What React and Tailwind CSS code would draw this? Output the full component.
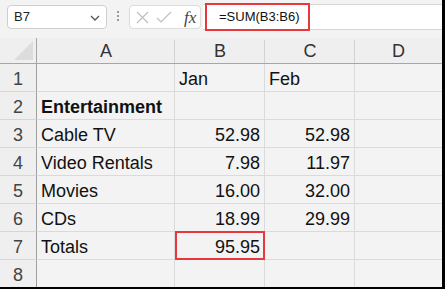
import React from "react";

const cellFont = { fontFamily: '"Liberation Sans", Arial, sans-serif' };

const rows = [
  { n: 1, a: "", b: "Jan", c: "Feb", bLeft: true },
  { n: 2, a: "Entertainment", bold: true, b: "", c: "" },
  { n: 3, a: "Cable TV", b: "52.98", c: "52.98" },
  { n: 4, a: "Video Rentals", b: "7.98", c: "11.97" },
  { n: 5, a: "Movies", b: "16.00", c: "32.00" },
  { n: 6, a: "CDs", b: "18.99", c: "29.99" },
  { n: 7, a: "Totals", b: "95.95", c: "", boxed: true },
  { n: 8, a: "", b: "", c: "" },
];

function Cell({ children, align = "left", bold = false, boxed = false, last = false }) {
  return (
    <div
      className={
        "relative h-[28px] border-b border-[#dadada] pt-[3px] leading-[25px] text-[18px] text-[#111] whitespace-nowrap overflow-visible " +
        (last ? "" : "border-r ") +
        (align === "right" ? "text-right pr-[4px] " : "text-left pl-[4px] ") +
        (bold ? "font-bold" : "")
      }
    >
      {children}
      {boxed && (
        <div className="absolute left-0 top-[-1px] w-[90px] h-[29px] border-2 border-[#e8383d] pointer-events-none" />
      )}
    </div>
  );
}

export default function App() {
  return (
    <div
      className="w-[445px] h-[289px] bg-[#f3f3f3] overflow-hidden border-r-[3px] border-b-[2px] border-black flex flex-col"
      style={cellFont}
    >
      {/* top bar */}
      <div className="h-[38px] flex items-start shrink-0">
        <div className="ml-[7px] mt-[5px] w-[100px] h-[24px] bg-white border border-[#cfcfcf] rounded-[4px] flex items-center justify-between pl-[6px] pr-[6px]">
          <span className="text-[13px] text-[#222]">B7</span>
          <svg width="10" height="6" viewBox="0 0 10 6" className="mt-[1px]">
            <path d="M1 1 L5 5 L9 1" fill="none" stroke="#555" strokeWidth="1.3" />
          </svg>
        </div>
        <div className="ml-[10px] mt-[11px] flex flex-col gap-[2px]">
          <div className="w-[2px] h-[2px] bg-[#9a9a9a]" />
          <div className="w-[2px] h-[2px] bg-[#9a9a9a]" />
          <div className="w-[2px] h-[2px] bg-[#9a9a9a]" />
        </div>
        <div className="ml-[10px] mt-[5px] w-[72px] h-[24px] bg-white border border-[#dcdcdc] rounded-[4px] flex items-center pl-[6px]">
          <svg width="13" height="13" viewBox="0 0 13 13">
            <path d="M1 1 L12 12 M12 1 L1 12" stroke="#bdbdbd" strokeWidth="1.1" fill="none" />
          </svg>
          <svg width="16" height="13" viewBox="0 0 16 13" className="ml-[7px]">
            <path d="M1 7 L5 11 L15 1" stroke="#bdbdbd" strokeWidth="1.1" fill="none" />
          </svg>
          <span
            className="ml-[12px] text-[17px] italic text-[#444] leading-none"
            style={{ fontFamily: '"Liberation Serif", "Times New Roman", serif' }}
          >
            fx
          </span>
        </div>
        <div className="ml-[2px] mt-[4px] flex-1 h-[26px] bg-white border-y border-[#d6d6d6] flex items-center">
          <div className="ml-[2px] w-[105px] h-[28px] shrink-0 border-2 border-[#e8383d] flex items-center pl-[12px] text-[13px] text-[#111] whitespace-nowrap">
            =SUM(B3:B6)
          </div>
        </div>
      </div>

      {/* grid */}
      <div className="grid grid-cols-[37px_138px_90px_90px_1fr]">
        {/* header row */}
        <div className="h-[26px] bg-[#efefef] border-r border-b border-[#a6a6a6] flex items-end justify-end pr-[2px] pb-[2px]">
          <svg width="20" height="20" viewBox="0 0 20 20">
            <path d="M19 0 L19 19 L0 19 Z" fill="#dcdcdc" />
          </svg>
        </div>
        {["A", "B", "C", "D"].map((l, i) => (
          <div
            key={l}
            className={
              "h-[26px] bg-[#efefef] border-b border-[#a6a6a6] relative text-center text-[18px] text-[#333] pt-[1px] leading-[25px]"
            }
          >
            {l}
            {i < 3 && <div className="absolute right-0 top-[2px] bottom-0 w-px bg-[#d2d2d2]" />}
          </div>
        ))}

        {rows.map((r) => (
          <React.Fragment key={r.n}>
            <div className="h-[28px] bg-[#efefef] border-r border-[#a0a0a0] border-b border-b-[#d6d6d6] text-center text-[18px] text-[#444] pt-[3px] leading-[25px]">
              {r.n}
            </div>
            <Cell bold={r.bold}>{r.a}</Cell>
            <Cell align={r.bLeft ? "left" : "right"} boxed={r.boxed}>
              {r.b}
            </Cell>
            <Cell align={r.bLeft ? "left" : "right"}>{r.c}</Cell>
            <Cell last>{""}</Cell>
          </React.Fragment>
        ))}
      </div>
    </div>
  );
}
